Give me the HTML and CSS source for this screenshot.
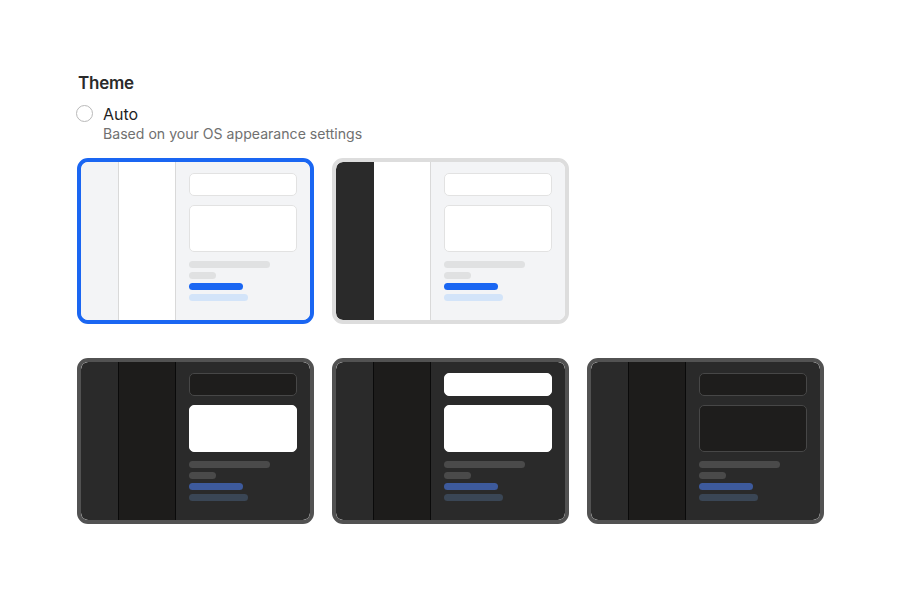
FILE: index.html
```html
<!DOCTYPE html>
<html lang="en">
<head>
<meta charset="utf-8">
<title>Theme</title>
<link rel="stylesheet" href="styles.css">
</head>
<body>
<main class="page">
  <h2 class="title">Theme</h2>
  <div class="option">
    <span class="radio"></span>
    <div class="option-text">
      <div class="option-label">Auto</div>
      <div class="option-desc">Based on your OS appearance settings</div>
    </div>
  </div>

  <div class="themes">
    <div class="card card-selected">
      <div class="screen light">
        <div class="rail"></div>
        <div class="side"></div>
        <div class="pane">
          <div class="box box-sm"></div>
          <div class="box box-lg"></div>
          <div class="bar bar-a"></div>
          <div class="bar bar-b"></div>
          <div class="bar bar-c accent"></div>
          <div class="bar bar-d accent-soft"></div>
        </div>
      </div>
    </div>

    <div class="card card-light">
      <div class="screen light dark-rail">
        <div class="rail"></div>
        <div class="side"></div>
        <div class="pane">
          <div class="box box-sm"></div>
          <div class="box box-lg"></div>
          <div class="bar bar-a"></div>
          <div class="bar bar-b"></div>
          <div class="bar bar-c accent"></div>
          <div class="bar bar-d accent-soft"></div>
        </div>
      </div>
    </div>

    <div class="card card-dark row-two">
      <div class="screen dark">
        <div class="rail"></div>
        <div class="side"></div>
        <div class="pane">
          <div class="box box-sm"></div>
          <div class="box box-lg box-white"></div>
          <div class="bar bar-a"></div>
          <div class="bar bar-b"></div>
          <div class="bar bar-c accent"></div>
          <div class="bar bar-d accent-soft"></div>
        </div>
      </div>
    </div>

    <div class="card card-dark row-two">
      <div class="screen dark">
        <div class="rail"></div>
        <div class="side"></div>
        <div class="pane">
          <div class="box box-sm box-white"></div>
          <div class="box box-lg box-white"></div>
          <div class="bar bar-a"></div>
          <div class="bar bar-b"></div>
          <div class="bar bar-c accent"></div>
          <div class="bar bar-d accent-soft"></div>
        </div>
      </div>
    </div>

    <div class="card card-dark row-two">
      <div class="screen dark">
        <div class="rail"></div>
        <div class="side"></div>
        <div class="pane">
          <div class="box box-sm"></div>
          <div class="box box-lg"></div>
          <div class="bar bar-a"></div>
          <div class="bar bar-b"></div>
          <div class="bar bar-c accent"></div>
          <div class="bar bar-d accent-soft"></div>
        </div>
      </div>
    </div>
  </div>
</main>
</body>
</html>
```

FILE: styles.css
```css
html, body {
  margin: 0;
  padding: 0;
  background: #ffffff;
}

body {
  font-family: Inter, "Noto Sans", "DejaVu Sans", sans-serif;
  color: #1f1f1f;
}

.page {
  padding: 73px 0 0 78px;
}

.title {
  margin: 0;
  font-size: 17px;
  font-weight: 600;
  line-height: 20px;
  letter-spacing: -0.25px;
  color: #2a2a2a;
}

.option {
  display: flex;
  align-items: flex-start;
  margin-top: 10px;
}

.radio {
  box-sizing: border-box;
  width: 17px;
  height: 17px;
  border: 1px solid #b9b9b9;
  border-radius: 50%;
  margin: 2px 0 0 -2px;
  flex: none;
}

.option-text {
  margin-left: 10px;
}

.option-label {
  font-size: 16px;
  line-height: 22px;
  color: #1f1f1f;
}

.option-desc {
  font-size: 14.1px;
  line-height: 18px;
  color: #707070;
}

.themes {
  display: grid;
  grid-template-columns: repeat(3, 237px);
  column-gap: 18px;
  row-gap: 34px;
  margin-top: 15px;
  margin-left: -1px;
}

.row-two {
  grid-row: 2;
}

.card {
  box-sizing: border-box;
  width: 237px;
  height: 166px;
  border: 4px solid #dcdcdc;
  border-radius: 11px;
  overflow: hidden;
}

.card-selected {
  border-color: #1a66f2;
}

.card-light {
  border-color: #dddddd;
}

.card-dark {
  border-color: #525252;
}

.screen {
  display: grid;
  grid-template-columns: 38px 57px 1fr;
  height: 100%;
  border-radius: 7px;
  overflow: hidden;
}

.rail, .side {
  box-sizing: border-box;
  height: 100%;
}

.pane {
  padding: 11px 13px 0 13px;
  display: flex;
  flex-direction: column;
  align-items: flex-start;
}

.box {
  box-sizing: border-box;
  width: 108px;
  border-radius: 5px;
  border: 1px solid #e2e2e2;
  background: #ffffff;
}

.box-sm {
  height: 23px;
}

.box-lg {
  height: 47px;
  margin-top: 9px;
}

.bar {
  height: 7px;
  border-radius: 4px;
  margin-top: 4px;
}

.bar-a { width: 81px; margin-top: 9px; }
.bar-b { width: 27px; }
.bar-c { width: 54px; }
.bar-d { width: 59px; }

/* light screen */
.light .rail {
  background: #f3f4f6;
  border-right: 1px solid #d9d9d9;
}
.light .side {
  background: #ffffff;
  border-right: 1px solid #d9d9d9;
}
.light .pane {
  background: #f3f4f6;
}
.light .bar-a, .light .bar-b {
  background: #e0e1e2;
}
.light .accent {
  background: #1a66f2;
}
.light .accent-soft {
  background: #d3e4f9;
}

.dark-rail .rail {
  background: #2a2a2a;
  border-right: none;
}

/* dark screen */
.dark .rail {
  background: #2a2a2a;
  border-right: 1px solid #0a0a0a;
}
.dark .side {
  background: #1d1c1b;
  border-right: 1px solid #0a0a0a;
}
.dark .pane {
  background: #2a2a2a;
}
.dark .box {
  background: #1e1d1c;
  border-color: #474747;
}
.dark .box-white {
  background: #ffffff;
  border-color: #ffffff;
}
.dark .bar-a, .dark .bar-b {
  background: #4a4a4a;
}
.dark .accent {
  background: #3d5a9c;
}
.dark .accent-soft {
  background: #3a4655;
}
```
